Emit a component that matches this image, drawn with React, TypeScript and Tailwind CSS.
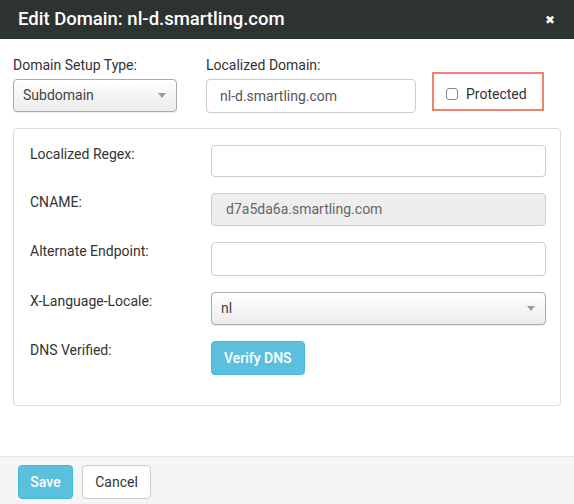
import React from 'react';

function Caret() {
  return (
    <svg width="8" height="5" viewBox="0 0 8 5" className="shrink-0">
      <path d="M0 0 L8 0 L4 5 Z" fill="#9a9a9a" />
    </svg>
  );
}

function Row({ label, children }: { label: string; children: React.ReactNode }) {
  return (
    <div className="flex items-start">
      <div className="w-[181px] shrink-0 text-[14px] leading-[18px] text-[#333]">{label}</div>
      <div className="flex-1">{children}</div>
    </div>
  );
}

export default function App() {
  return (
    <div
      className="w-[574px] h-[504px] flex flex-col bg-white text-[#333] overflow-hidden"
      style={{ fontFamily: 'Roboto, "Open Sans", sans-serif' }}
    >
      {/* header */}
      <div className="h-[39px] shrink-0 bg-[#2d3331] flex items-center justify-between pl-[18px] pr-[19px]">
        <span className="text-white text-[18.5px] font-medium">Edit Domain: nl-d.smartling.com</span>
        <span className="text-white text-[12px] leading-none">✖</span>
      </div>

      {/* body */}
      <div className="flex-1 px-[13px] pt-[17px]">
        <div className="flex items-start">
          <div className="w-[164px] flex flex-col gap-[5px]">
            <label className="text-[14px] leading-[18px]">Domain Setup Type:</label>
            <div className="h-[33px] rounded-[4px] border border-[#aaa] bg-gradient-to-b from-white to-[#ececec] shadow-[0_1px_1px_rgba(0,0,0,0.08)] flex items-center justify-between pl-[9px] pr-[10px]">
              <span className="text-[14px] text-[#444]">Subdomain</span>
              <Caret />
            </div>
          </div>
          <div className="w-[210px] ml-[29px] flex flex-col gap-[5px]">
            <label className="text-[14px] leading-[18px]">Localized Domain:</label>
            <div className="h-[34px] rounded-[4px] border border-[#ccc] bg-white flex items-center pl-[13px]">
              <span className="text-[14px] text-[#555]">nl-d.smartling.com</span>
            </div>
          </div>
          <div className="ml-[16px] mt-[16px] w-[112px] h-[39px] border-2 border-[#f0826e] flex items-center pl-[12px] pt-[5px] gap-[8px]">
            <span className="w-[12px] h-[12px] rounded-[3px] border border-[#8a8a8a] bg-white" />
            <span className="text-[14px] text-[#333]">Protected</span>
          </div>
        </div>

        <div className="mt-[15px] rounded-[4px] border border-[#dcdcdc] pl-[16px] pr-[14px] pt-[16px] pb-[30px] flex flex-col gap-[16px]">
          <Row label="Localized Regex:">
            <div className="h-[32px] rounded-[4px] border border-[#ccc] bg-white" />
          </Row>
          <Row label="CNAME:">
            <div className="h-[33px] rounded-[4px] border border-[#ccc] bg-[#eeeeee] flex items-center pl-[14px]">
              <span className="text-[14px] text-[#666]">d7a5da6a.smartling.com</span>
            </div>
          </Row>
          <Row label="Alternate Endpoint:">
            <div className="h-[34px] rounded-[4px] border border-[#ccc] bg-white" />
          </Row>
          <Row label="X-Language-Locale:">
            <div className="h-[33px] rounded-[4px] border border-[#aaa] bg-gradient-to-b from-white to-[#ececec] shadow-[0_1px_1px_rgba(0,0,0,0.08)] flex items-center justify-between pl-[9px] pr-[10px]">
              <span className="text-[14px] text-[#444]">nl</span>
              <Caret />
            </div>
          </Row>
          <Row label="DNS Verified:">
            <button className="h-[34px] px-[12px] rounded-[4px] border border-[#46b8da] bg-[#5bc0de] text-white text-[14px] font-medium">
              Verify DNS
            </button>
          </Row>
        </div>
      </div>

      {/* footer */}
      <div className="h-[48px] shrink-0 bg-[#f5f5f5] border-t border-[#e5e5e5] flex items-start pt-[8px] pl-[18px] gap-[9px]">
        <button className="h-[34px] w-[55px] rounded-[4px] border border-[#46b8da] bg-[#5bc0de] text-white text-[14px] font-medium">
          Save
        </button>
        <button className="h-[34px] w-[69px] rounded-[4px] border border-[#ccc] bg-white text-[#333] text-[14px]">
          Cancel
        </button>
      </div>
    </div>
  );
}
